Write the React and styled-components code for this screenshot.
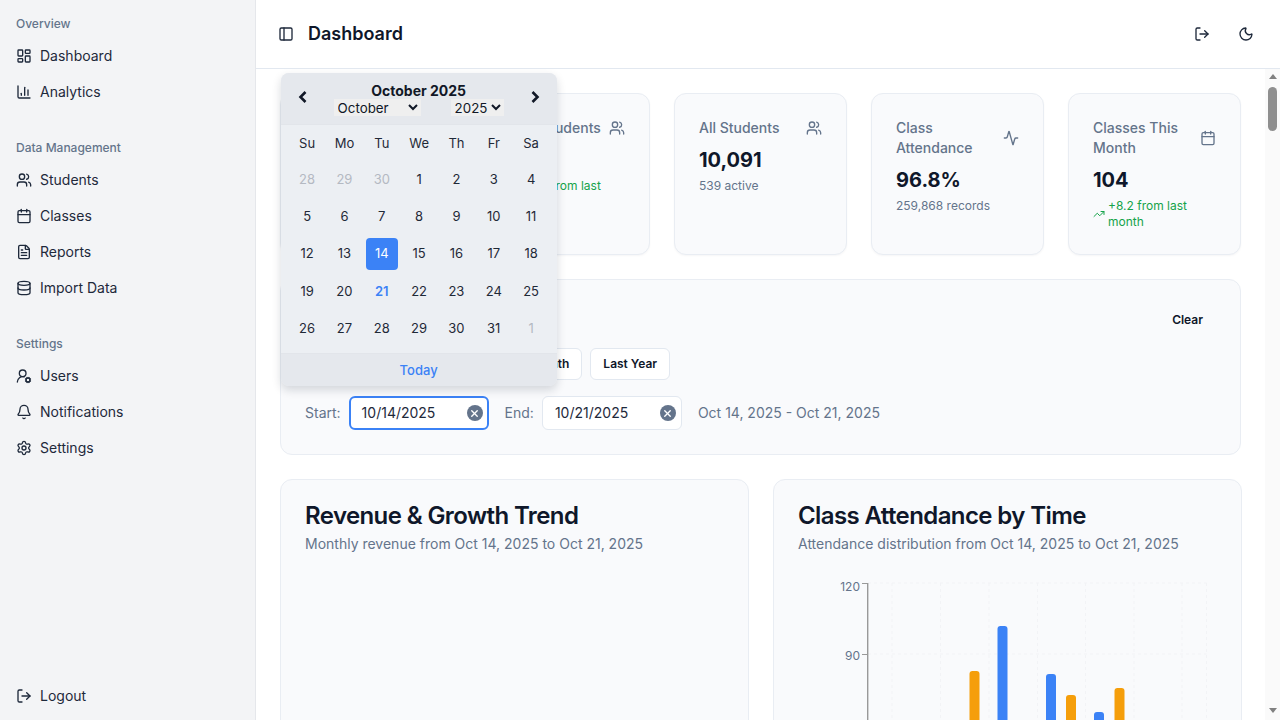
import React from "react";
import styled, { createGlobalStyle } from "styled-components";
import {
  Activity,
  Bell,
  Calendar,
  ChartColumn,
  Database,
  FileText,
  LayoutDashboard,
  LogOut,
  Moon,
  PanelLeft,
  Settings,
  TrendingUp,
  UserRoundCog,
  Users,
  X,
} from "lucide-react";

const GlobalStyle = createGlobalStyle`
  html, body {
    margin: 0;
    height: 100%;
    overflow: hidden;
    background: #fff;
    font-family: Inter, "Liberation Sans", sans-serif;
    color: #0f172a;
  }
  * { box-sizing: border-box; }
`;

const navGroups = [
  {
    label: "Overview",
    items: [
      { label: "Dashboard", icon: LayoutDashboard },
      { label: "Analytics", icon: ChartColumn },
    ],
  },
  {
    label: "Data Management",
    items: [
      { label: "Students", icon: Users },
      { label: "Classes", icon: Calendar },
      { label: "Reports", icon: FileText },
      { label: "Import Data", icon: Database },
    ],
  },
  {
    label: "Settings",
    items: [
      { label: "Users", icon: UserRoundCog },
      { label: "Notifications", icon: Bell },
      { label: "Settings", icon: Settings },
    ],
  },
];

const stats = [
  { title: "Total Revenue", icon: Activity, value: "$84,210", note: "+12.5% from last month", up: true },
  { title: "Adult Students", icon: Users, value: "539", note: "+12.5 from last month", up: true },
  { title: "All Students", icon: Users, value: "10,091", note: "539 active" },
  { title: "Class Attendance", icon: Activity, value: "96.8%", note: "259,868 records" },
  { title: "Classes This Month", icon: Calendar, value: "104", note: "+8.2 from last month", up: true },
];

const weekDays = ["Su", "Mo", "Tu", "We", "Th", "Fr", "Sa"];
const days = [
  { n: 28, muted: true }, { n: 29, muted: true }, { n: 30, muted: true },
  ...Array.from({ length: 31 }, (_, i) => ({
    n: i + 1,
    selected: i + 1 === 14,
    today: i + 1 === 21,
  })),
  { n: 1, muted: true },
];
const months = ["January", "February", "March", "April", "May", "June", "July", "August", "September", "October", "November", "December"];
const presets = ["This Week", "This Term", "Last Month", "Last Year"];

const bars = [
  { x: 969.5, top: 671, color: "#f59e0b" },
  { x: 997.5, top: 626, color: "#3b82f6" },
  { x: 1046, top: 674, color: "#3b82f6" },
  { x: 1066, top: 695, color: "#f59e0b" },
  { x: 1094, top: 712, color: "#3b82f6" },
  { x: 1114.5, top: 688, color: "#f59e0b" },
];
const gridX = [892, 940.5, 989, 1037.5, 1085.5, 1134, 1182, 1206.5];
const gridY = [583, 654, 725, 796];

const Chevron = ({ flip }) => (
  <svg width="12" height="14" viewBox="0 0 12 14" style={{ transform: flip ? "scaleX(-1)" : "none" }}>
    <path d="M8.5 2 3.5 7l5 5" fill="none" stroke="#111827" strokeWidth="2.6" />
  </svg>
);

const AttendanceChart = () => (
  <ChartSvg viewBox="798 578 419 320">
    {gridX.map((x) => (
      <line key={x} x1={x} x2={x} y1="583" y2="867" stroke="#f2f3f6" strokeDasharray="3 3" />
    ))}
    {gridY.map((y) => (
      <line key={y} x1="868" x2="1206.5" y1={y} y2={y} stroke="#f2f3f6" strokeDasharray="3 3" />
    ))}
    <line x1="867.7" x2="867.7" y1="583" y2="867" stroke="#999" strokeWidth="1.4" />
    {gridY.map((y) => (
      <line key={y} x1="862" x2="867.5" y1={y + 0.5} y2={y + 0.5} stroke="#999" />
    ))}
    <AxisText x="860" y="590.5">120</AxisText>
    <AxisText x="860" y="659.5">90</AxisText>
    {bars.map((b) => (
      <rect key={b.x} x={b.x} y={b.top} width="10" height={867 - b.top} rx="3" fill={b.color} />
    ))}
  </ChartSvg>
);

export default function App() {
  return (
    <Shell>
      <GlobalStyle />
      <Sidebar>
        <NavGroups>
          {navGroups.map((group) => (
            <NavGroup key={group.label}>
              <NavLabel>{group.label}</NavLabel>
              {group.items.map(({ label, icon: Icon }) => (
                <NavItem key={label}>
                  <Icon size={16} strokeWidth={2} />
                  {label}
                </NavItem>
              ))}
            </NavGroup>
          ))}
        </NavGroups>
        <NavItem>
          <LogOut size={16} />
          Logout
        </NavItem>
      </Sidebar>

      <Main>
        <TopBar>
          <TopLeft>
            <IconButton><PanelLeft size={16} /></IconButton>
            <PageTitle>Dashboard</PageTitle>
          </TopLeft>
          <TopRight>
            <IconButton $big><LogOut size={16} /></IconButton>
            <IconButton $big><Moon size={16} /></IconButton>
          </TopRight>
        </TopBar>

        <Body>
          <Scroller>
            <Content>
              <StatGrid>
                {stats.map(({ title, icon: Icon, value, note, up }) => (
                  <StatCard key={title}>
                    <StatHead>
                      <StatTitle>{title}</StatTitle>
                      <Icon size={16} color="#64748b" />
                    </StatHead>
                    <StatValue>{value}</StatValue>
                    <StatNote $up={up}>
                      {up && <TrendingUp size={12} />}
                      <span>{note}</span>
                    </StatNote>
                  </StatCard>
                ))}
              </StatGrid>

              <FilterPanel>
                <FilterHead>
                  <FilterTitle>Date Range</FilterTitle>
                  <ClearButton>Clear</ClearButton>
                </FilterHead>
                <Presets>
                  {presets.map((p) => (
                    <PresetButton key={p}>{p}</PresetButton>
                  ))}
                </Presets>
                <DateRow>
                  <DateLabel>Start:</DateLabel>
                  <DateField $focused>
                    10/14/2025
                    <ClearDot $focused><X size={11} strokeWidth={3} color="#fff" /></ClearDot>
                    <Popover>
                      <PopHead>
                        <NavArrow $side="left"><Chevron /></NavArrow>
                        <NavArrow $side="right"><Chevron flip /></NavArrow>
                        <PopMonth>October 2025</PopMonth>
                        <PopSelects>
                          <MonthSelect defaultValue="October">
                            {months.map((m) => <option key={m}>{m}</option>)}
                          </MonthSelect>
                          <YearSelect defaultValue="2025">
                            <option>2024</option>
                            <option>2025</option>
                            <option>2026</option>
                          </YearSelect>
                        </PopSelects>
                      </PopHead>
                      <PopBody>
                        {weekDays.map((d) => <WeekDay key={d}>{d}</WeekDay>)}
                        {days.map((d, i) => (
                          <Day key={i} $muted={d.muted} $selected={d.selected} $today={d.today}>{d.n}</Day>
                        ))}
                      </PopBody>
                      <PopFoot>Today</PopFoot>
                    </Popover>
                  </DateField>
                  <DateLabel>End:</DateLabel>
                  <DateField>
                    10/21/2025
                    <ClearDot><X size={11} strokeWidth={3} color="#fff" /></ClearDot>
                  </DateField>
                  <RangeText>Oct 14, 2025 - Oct 21, 2025</RangeText>
                </DateRow>
              </FilterPanel>

              <ChartGrid>
                <ChartCard>
                  <ChartTitle>Revenue &amp; Growth Trend</ChartTitle>
                  <ChartSub>Monthly revenue from Oct 14, 2025 to Oct 21, 2025</ChartSub>
                </ChartCard>
                <ChartCard>
                  <ChartTitle>Class Attendance by Time</ChartTitle>
                  <ChartSub>Attendance distribution from Oct 14, 2025 to Oct 21, 2025</ChartSub>
                  <AttendanceChart />
                </ChartCard>
              </ChartGrid>
            </Content>
          </Scroller>
          <ScrollRail>
            <ScrollArrow $up />
            <ScrollThumb />
            <ScrollArrow />
          </ScrollRail>
        </Body>
      </Main>
    </Shell>
  );
}

const Shell = styled.div`
  display: flex;
  height: 100vh;
  overflow: hidden;
`;

const Sidebar = styled.aside`
  width: 256px;
  flex-shrink: 0;
  display: flex;
  flex-direction: column;
  padding: 10px 8px 6px;
  background: #f3f4f6;
  border-right: 1px solid #e5e7eb;
`;

const NavGroups = styled.nav`
  flex: 1;
  display: flex;
  flex-direction: column;
  gap: 24px;
`;

const NavGroup = styled.div`
  display: flex;
  flex-direction: column;
`;

const NavLabel = styled.div`
  height: 28px;
  padding: 0 8px;
  display: flex;
  align-items: center;
  font-size: 12px;
  line-height: 16px;
  font-weight: 500;
  color: #64748b;
`;

const NavItem = styled.div`
  height: 36px;
  padding: 0 8px;
  display: flex;
  align-items: center;
  gap: 8px;
  font-size: 14px;
  line-height: 20px;
  color: #1e293b;
`;

const Main = styled.main`
  flex: 1;
  min-width: 0;
  display: flex;
  flex-direction: column;
`;

const TopBar = styled.header`
  height: 69px;
  flex-shrink: 0;
  display: flex;
  align-items: center;
  justify-content: space-between;
  padding: 0 16px;
  border-bottom: 1px solid #e2e8f0;
`;

const TopLeft = styled.div`
  display: flex;
  align-items: center;
  gap: 8px;
`;

const TopRight = styled.div`
  display: flex;
  align-items: center;
  gap: 8px;
`;

const IconButton = styled.button`
  width: ${(p) => (p.$big ? "36px" : "28px")};
  height: ${(p) => (p.$big ? "36px" : "28px")};
  display: flex;
  align-items: center;
  justify-content: center;
  padding: 0;
  border: 0;
  background: none;
  color: #1e293b;
`;

const PageTitle = styled.h1`
  margin: 0;
  font-size: 18px;
  line-height: 28px;
  font-weight: 600;
  color: #0f172a;
`;

const Body = styled.div`
  flex: 1;
  min-height: 0;
  display: flex;
`;

const Scroller = styled.div`
  flex: 1;
  min-width: 0;
  overflow: hidden;
`;

const ScrollRail = styled.div`
  width: 15px;
  flex-shrink: 0;
  display: flex;
  flex-direction: column;
  align-items: center;
  padding-bottom: 2px;
  background: #fafafa;
`;

const ScrollArrow = styled.div`
  height: 15px;
  flex-shrink: 0;
  display: flex;
  align-items: center;
  margin-top: ${(p) => (p.$up ? "0" : "auto")};
  &::before {
    content: "";
    border-left: 4.5px solid transparent;
    border-right: 4.5px solid transparent;
    ${(p) => (p.$up ? "border-bottom" : "border-top")}: 5px solid #808080;
  }
`;

const ScrollThumb = styled.div`
  width: 9px;
  height: 44px;
  margin-top: 3px;
  border-radius: 5px;
  background: #8f8f8f;
`;

const Content = styled.div`
  padding: 24px;
  display: flex;
  flex-direction: column;
  gap: 24px;
`;

const StatGrid = styled.section`
  display: grid;
  grid-template-columns: repeat(5, 1fr);
  gap: 24px;
`;

const StatCard = styled.div`
  padding: 24px;
  min-height: 162px;
  background: #f9fafc;
  border: 1px solid #e9edf3;
  border-radius: 12px;
  box-shadow: 0 1px 2px rgba(15, 23, 42, 0.04);
`;

const StatHead = styled.div`
  display: flex;
  align-items: center;
  justify-content: space-between;
  margin-bottom: 6px;
  svg { flex-shrink: 0; }
`;

const StatTitle = styled.div`
  font-size: 14px;
  line-height: 20px;
  font-weight: 500;
  color: #64748b;
`;

const StatValue = styled.div`
  font-size: 20px;
  line-height: 32px;
  font-weight: 700;
  color: #0f172a;
`;

const StatNote = styled.div`
  margin-top: 2px;
  display: flex;
  align-items: center;
  gap: 3px;
  font-size: 12px;
  line-height: 16px;
  color: ${(p) => (p.$up ? "#16a34a" : "#64748b")};
  svg { flex-shrink: 0; }
`;

const FilterPanel = styled.section`
  padding: 24px;
  background: #f9fafc;
  border: 1px solid #e9edf3;
  border-radius: 12px;
`;

const FilterHead = styled.div`
  height: 32px;
  display: flex;
  align-items: center;
  justify-content: space-between;
  margin-bottom: 12px;
`;

const FilterTitle = styled.h2`
  margin: 0;
  font-size: 16px;
  font-weight: 600;
`;

const ClearButton = styled.button`
  height: 32px;
  padding: 0 13px;
  border: 0;
  background: none;
  font: 600 12px/16px Inter, sans-serif;
  color: #0f172a;
`;

const Presets = styled.div`
  display: flex;
  gap: 8px;
  margin-bottom: 16px;
`;

const PresetButton = styled.button`
  height: 32px;
  padding: 0 12px;
  background: #fff;
  border: 1px solid #e2e8f0;
  border-radius: 6px;
  font: 600 12px/16px Inter, sans-serif;
  color: #0f172a;
`;

const DateRow = styled.div`
  display: flex;
  align-items: center;
  gap: 8px;
`;

const DateLabel = styled.span`
  font-size: 14px;
  line-height: 20px;
  color: #64748b;
`;

const DateField = styled.div`
  position: relative;
  width: 140px;
  height: 34px;
  display: flex;
  align-items: center;
  padding-left: ${(p) => (p.$focused ? "11px" : "12px")};
  margin-right: 8px;
  background: #fff;
  border: ${(p) => (p.$focused ? "2px solid #3b82f6" : "1px solid #e2e8f0")};
  border-radius: 6px;
  font-size: 14px;
  line-height: 20px;
  color: #1e293b;
`;

const ClearDot = styled.span`
  position: absolute;
  top: 50%;
  right: ${(p) => (p.$focused ? "4px" : "5px")};
  width: 16px;
  height: 16px;
  margin-top: -8px;
  display: flex;
  align-items: center;
  justify-content: center;
  border-radius: 50%;
  background: #64748b;
`;

const RangeText = styled.span`
  font-size: 14px;
  line-height: 20px;
  color: #64748b;
`;

const Popover = styled.div`
  position: absolute;
  z-index: 10;
  left: -70px;
  bottom: calc(100% + 12px);
  width: 276px;
  border-radius: 8px;
  overflow: hidden;
  background: #eceff3;
  box-shadow: 0 4px 10px rgba(15, 23, 42, 0.16);
`;

const PopHead = styled.div`
  position: relative;
  height: 52px;
  padding-top: 9px;
  display: flex;
  flex-direction: column;
  align-items: center;
  background: #e5e8ed;
  border-bottom: 1px solid #e2e5ea;
`;

const NavArrow = styled.span`
  position: absolute;
  top: 17px;
  ${(p) => p.$side}: 16px;
  line-height: 0;
`;

const PopMonth = styled.div`
  font-size: 14px;
  line-height: 17px;
  font-weight: 700;
  color: #111827;
`;

const PopSelects = styled.div`
  display: flex;
  gap: 30px;
`;

const MonthSelect = styled.select`
  width: 87px;
  height: 17px;
  padding: 0;
  border: 0;
  border-radius: 0;
  background-color: #efefef;
  font: 13.33px Inter, sans-serif;
  color: #111827;
`;

const YearSelect = styled(MonthSelect)`
  width: 53px;
`;

const PopBody = styled.div`
  display: grid;
  grid-template-columns: repeat(7, 37.33px);
  grid-template-rows: 36px repeat(5, 37.33px);
  justify-content: center;
  height: 228px;
  padding-left: 1px;
`;

const WeekDay = styled.div`
  display: flex;
  align-items: center;
  justify-content: center;
  font-size: 13px;
  line-height: 16px;
  color: #1f2937;
`;

const Day = styled.div`
  width: 32px;
  height: 32px;
  margin: auto;
  padding-bottom: 2px;
  display: flex;
  align-items: center;
  justify-content: center;
  border-radius: 4px;
  font-size: 13px;
  line-height: 16px;
  font-weight: ${(p) => (p.$today ? 600 : 400)};
  color: ${(p) =>
    p.$selected ? "#fff" : p.$today ? "#3b82f6" : p.$muted ? "#b4b9c2" : "#1f2937"};
  background: ${(p) => (p.$selected ? "#3b82f6" : "transparent")};
`;

const PopFoot = styled.div`
  height: 33px;
  display: flex;
  align-items: center;
  justify-content: center;
  background: #e5e8ed;
  border-top: 1px solid #e2e5ea;
  font-size: 13px;
  line-height: 16px;
  font-weight: 500;
  color: #3b82f6;
`;

const ChartGrid = styled.section`
  display: grid;
  grid-template-columns: 469px 1fr;
  gap: 24px;
`;

const ChartCard = styled.div`
  padding: 24px;
  min-height: 420px;
  background: #f9fafc;
  border: 1px solid #e9edf3;
  border-radius: 12px;
`;

const ChartTitle = styled.h2`
  margin: 0 0 6px;
  font-size: 24px;
  line-height: 24px;
  font-weight: 600;
  letter-spacing: -0.025em;
  color: #0f172a;
`;

const ChartSub = styled.p`
  margin: 0 0 24px;
  font-size: 14px;
  line-height: 20px;
  color: #64748b;
`;

const ChartSvg = styled.svg`
  display: block;
  width: 419px;
  height: 320px;
`;

const AxisText = styled.text`
  font-size: 12px;
  fill: #64748b;
  text-anchor: end;
`;
